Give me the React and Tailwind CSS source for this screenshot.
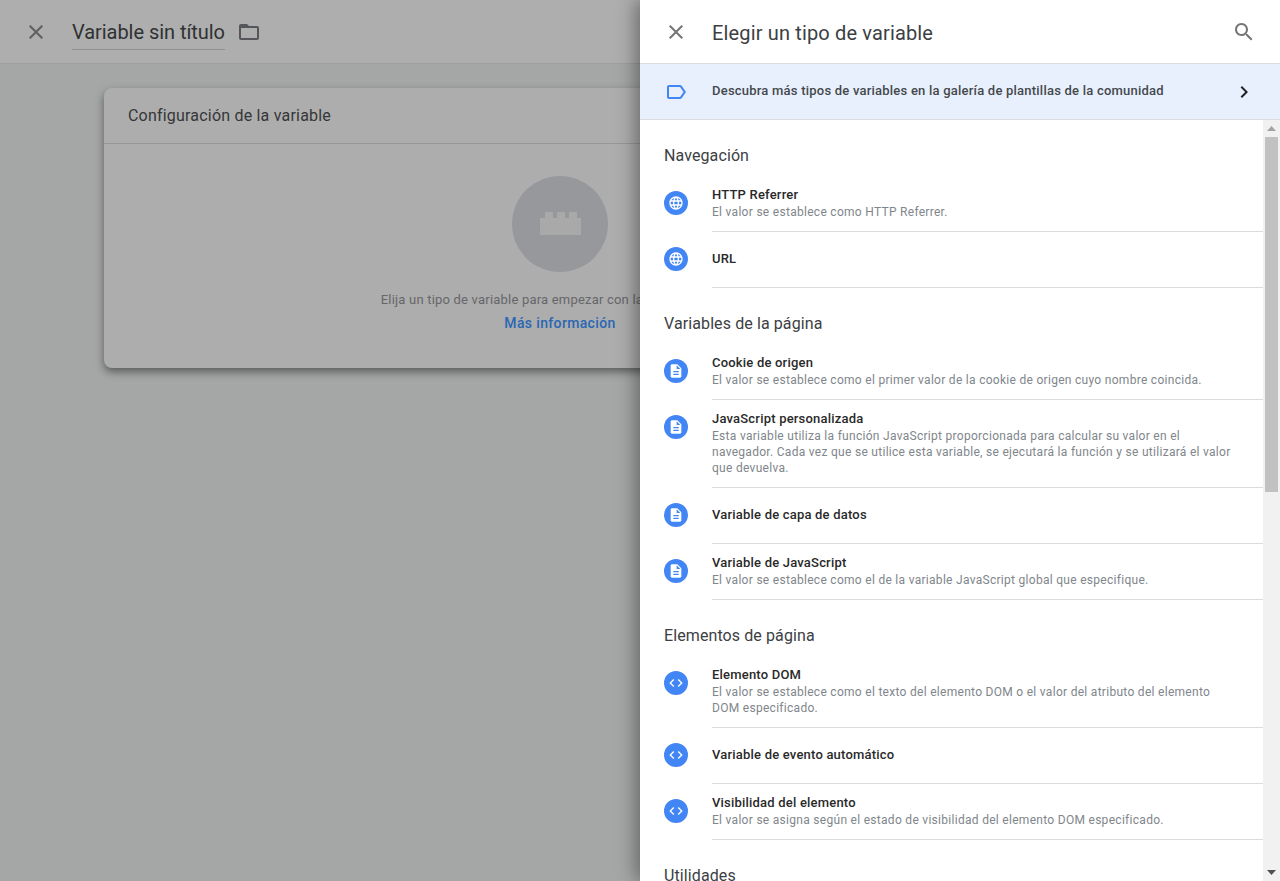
import React from "react";

const PATHS = {
  close:
    "M19 6.41L17.59 5 12 10.59 6.41 5 5 6.41 10.59 12 5 17.59 6.41 19 12 13.41 17.59 19 19 17.59 13.41 12 19 6.41z",
  folder:
    "M20 6h-8l-2-2H4c-1.1 0-1.99.9-1.99 2L2 18c0 1.1.9 2 2 2h16c1.1 0 2-.9 2-2V8c0-1.1-.9-2-2-2zm0 12H4V8h16v10z",
  search:
    "M15.5 14h-.79l-.28-.27C15.41 12.59 16 11.11 16 9.5 16 5.91 13.09 3 9.5 3S3 5.91 3 9.5 5.91 16 9.5 16c1.61 0 3.09-.59 4.23-1.57l.27.28v.79l5 4.99L20.49 19l-4.99-5zm-6 0C7.01 14 5 11.99 5 9.5S7.01 5 9.5 5 14 7.01 14 9.5 11.99 14 9.5 14z",
  chevron: "M10 6L8.59 7.41 13.17 12l-4.58 4.59L10 18l6-6z",
  label:
    "M17.63 5.84C17.27 5.33 16.67 5 16 5L5 5.01C3.9 5.01 3 5.9 3 7v10c0 1.1.9 1.99 2 1.99L16 19c.67 0 1.27-.33 1.63-.84L22 12l-4.37-6.16zM16 17H5V7h11l3.55 5L16 17z",
  globe:
    "M11.99 2C6.47 2 2 6.48 2 12s4.47 10 9.99 10C17.52 22 22 17.52 22 12S17.52 2 11.99 2zm6.93 6h-2.95c-.32-1.25-.78-2.45-1.38-3.56 1.84.63 3.37 1.91 4.33 3.56zM12 4.04c.83 1.2 1.48 2.53 1.91 3.96h-3.82c.43-1.43 1.08-2.76 1.91-3.96zM4.26 14C4.1 13.36 4 12.69 4 12s.1-1.36.26-2h3.38c-.08.66-.14 1.32-.14 2 0 .68.06 1.34.14 2H4.26zm.82 2h2.95c.32 1.25.78 2.45 1.38 3.56-1.84-.63-3.37-1.9-4.33-3.56zm2.95-8H5.08c.96-1.66 2.49-2.93 4.33-3.56C8.81 5.55 8.35 6.75 8.03 8zM12 19.96c-.83-1.2-1.48-2.53-1.91-3.96h3.82c-.43 1.43-1.08 2.76-1.91 3.96zM14.34 14H9.66c-.09-.66-.16-1.32-.16-2 0-.68.07-1.35.16-2h4.68c.09.65.16 1.32.16 2 0 .68-.07 1.34-.16 2zm.25 5.56c.6-1.11 1.06-2.31 1.38-3.56h2.95c-.96 1.65-2.49 2.93-4.33 3.56zM16.36 14c.08-.66.14-1.32.14-2 0-.68-.06-1.34-.14-2h3.38c.16.64.26 1.31.26 2s-.1 1.36-.26 2h-3.38z",
  doc: "M14 2H6c-1.1 0-1.99.9-1.99 2L4 20c0 1.1.89 2 1.99 2H18c1.1 0 2-.9 2-2V8l-6-6zm2 16H8v-2h8v2zm0-4H8v-2h8v2zm-3-5V3.5L18.5 9H13z",
  code: "M9.4 16.6L4.8 12l4.6-4.6L8 6l-6 6 6 6 1.4-1.4zm5.2 0l4.6-4.6-4.6-4.6L16 6l6 6-6 6-1.4-1.4z",
};

const SECTIONS = [
  {
    title: "Navegación",
    rows: [
      { icon: "globe", name: "HTTP Referrer", desc: "El valor se establece como HTTP Referrer." },
      { icon: "globe", name: "URL" },
    ],
  },
  {
    title: "Variables de la página",
    rows: [
      {
        icon: "doc",
        name: "Cookie de origen",
        desc: "El valor se establece como el primer valor de la cookie de origen cuyo nombre coincida.",
      },
      {
        icon: "doc",
        name: "JavaScript personalizada",
        desc: "Esta variable utiliza la función JavaScript proporcionada para calcular su valor en el navegador. Cada vez que se utilice esta variable, se ejecutará la función y se utilizará el valor que devuelva.",
      },
      { icon: "doc", name: "Variable de capa de datos" },
      {
        icon: "doc",
        name: "Variable de JavaScript",
        desc: "El valor se establece como el de la variable JavaScript global que especifique.",
      },
    ],
  },
  {
    title: "Elementos de página",
    rows: [
      {
        icon: "code",
        name: "Elemento DOM",
        desc: "El valor se establece como el texto del elemento DOM o el valor del atributo del elemento DOM especificado.",
      },
      { icon: "code", name: "Variable de evento automático" },
      {
        icon: "code",
        name: "Visibilidad del elemento",
        desc: "El valor se asigna según el estado de visibilidad del elemento DOM especificado.",
      },
    ],
  },
];

function Icon({ name, className }) {
  return (
    <svg viewBox="0 0 24 24" fill="currentColor" className={className}>
      <path d={PATHS[name]} />
    </svg>
  );
}

function Row({ icon, name, desc }) {
  return (
    <div className="flex pl-6">
      <div className="mt-[15px] mr-6 flex h-6 w-6 shrink-0 items-center justify-center rounded-full bg-[#4285f4] text-white">
        <Icon name={icon} className="h-4 w-4" />
      </div>
      {/* title-only rows sit a pixel higher than the title of a row with text */}
      <div
        className={
          desc
            ? "min-h-14 flex-1 border-b border-[#dadce0] pt-[10px] pr-6 pb-[11px]"
            : "flex min-h-14 flex-1 items-center border-b border-[#dadce0] pb-[2px]"
        }
      >
        <div className="text-[13px] leading-[18px] font-medium tracking-[0.2px] text-[#2a2a2a]">{name}</div>
        {desc && <div className="text-xs leading-4 tracking-[0.29px] text-[#80868b]">{desc}</div>}
      </div>
    </div>
  );
}

function Section({ title, rows }) {
  return (
    <section>
      <h2 className="pt-[26px] pb-[10px] pl-6 text-base leading-5 tracking-[0.1px] text-[#3c4043]">{title}</h2>
      {rows.map((r) => (
        <Row key={r.name} {...r} />
      ))}
    </section>
  );
}

function Scrollbar() {
  return (
    <div className="flex w-[17px] shrink-0 flex-col items-center bg-[#f1f1f1]">
      <svg width="9" height="5" viewBox="0 0 9 5" className="mt-[6px] fill-[#a3a3a3]">
        <path d="M4.5 0L9 5H0z" />
      </svg>
      <div className="mt-[6px] h-[355px] w-[13px] bg-[#c1c1c1]" />
      <svg width="9" height="5" viewBox="0 0 9 5" className="mt-auto mb-[6px] fill-[#505050]">
        <path d="M0 0h9L4.5 5z" />
      </svg>
    </div>
  );
}

function Editor() {
  return (
    <div className="min-w-0 flex-1 overflow-hidden bg-[#a5a7a6]">
      <header className="flex h-16 items-center border-b border-[#9d9e9e] bg-[#aeaeae] pl-6">
        <Icon name="close" className="mr-6 h-6 w-6 text-[#5f5f5f]" />
        <div className="border-b border-[#8f8f8f] pt-[6px] pb-[3px] text-xl leading-[27px] tracking-[-0.05px] text-[#2f3133]">
          Variable sin título
        </div>
        <Icon name="folder" className="ml-3 h-6 w-6 text-[#55565a]" />
      </header>
      <div className="mt-6 ml-[104px] w-[912px] rounded-lg bg-[#adadad] pb-[35px] shadow-[0_4px_8px_rgba(0,0,0,0.45)]">
        <div className="flex h-14 items-center border-b border-[#979797] pl-6 text-base tracking-[0.2px] text-[#353638]">
          Configuración de la variable
        </div>
        <div className="flex flex-col items-center pt-8">
          <div className="flex h-24 w-24 items-center justify-center rounded-full bg-[#97989b]">
            <svg width="41" height="23" viewBox="0 0 41 23" className="mb-px fill-[#a9a9a9]">
              <path d="M5 1q0-1 1-1h6q1 0 1 1v5H5zM17 1q0-1 1-1h6q1 0 1 1v5h-8zM29 1q0-1 1-1h6q1 0 1 1v5h-8zM0 6h41v17H0z" />
            </svg>
          </div>
          <p className="mt-[18px] text-[13px] leading-5 tracking-[0.2px] text-[#666769]">
            Elija un tipo de variable para empezar con la configuración...
          </p>
          <a className="mt-[3px] text-sm leading-5 font-medium tracking-[0.35px] text-[#2a67b3]">Más información</a>
        </div>
      </div>
    </div>
  );
}

function TypePicker() {
  return (
    <aside className="relative z-10 flex w-[640px] shrink-0 flex-col bg-white shadow-[-4px_0_18px_rgba(0,0,0,0.4)]">
      <header className="flex h-16 shrink-0 items-center border-b border-[#dadce0] px-6">
        <Icon name="close" className="mr-6 h-6 w-6 text-[#757575]" />
        <h1 className="flex-1 pt-[2px] text-xl tracking-[0.15px] text-[#3c4043]">Elegir un tipo de variable</h1>
        <Icon name="search" className="h-6 w-6 text-[#757575]" />
      </header>
      <div className="flex h-14 shrink-0 items-center border-b border-[#dadce0] bg-[#e8f0fe] px-6">
        <Icon name="label" className="mr-6 h-6 w-6 text-[#4285f4]" />
        <span className="flex-1 pb-[2px] text-[13px] font-medium tracking-[0.22px] text-[#44484c]">
          Descubra más tipos de variables en la galería de plantillas de la comunidad
        </span>
        <Icon name="chevron" className="h-6 w-6 text-[#212121]" />
      </div>
      <div className="flex min-h-0 flex-1">
        <div className="min-w-0 flex-1 overflow-hidden">
          {SECTIONS.map((s) => (
            <Section key={s.title} {...s} />
          ))}
          <Section title="Utilidades" rows={[]} />
        </div>
        <Scrollbar />
      </div>
    </aside>
  );
}

export default function App() {
  return (
    <div className="flex h-[881px] w-[1280px] overflow-hidden font-['Roboto',sans-serif]">
      <Editor />
      <TypePicker />
    </div>
  );
}
